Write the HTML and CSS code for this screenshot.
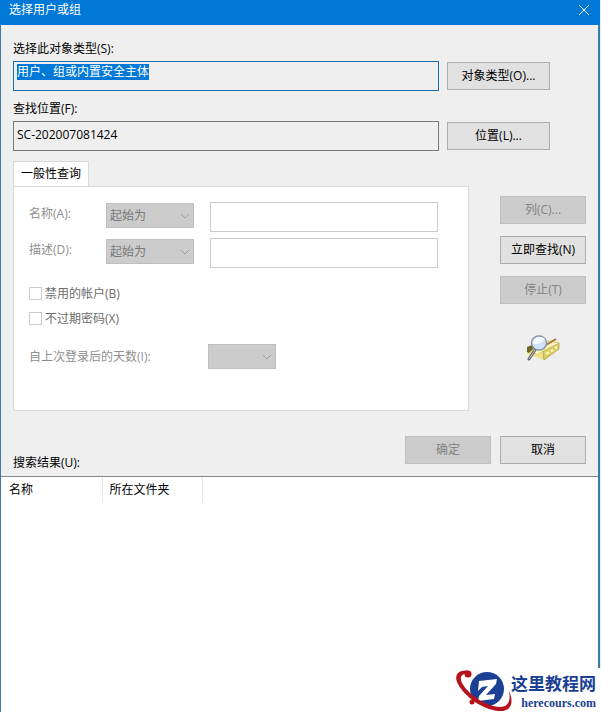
FILE: index.html
```html
<!DOCTYPE html>
<html lang="zh-CN">
<head>
  <meta charset="UTF-8">
  <meta name="viewport" content="width=device-width, initial-scale=1">
  <title>选择用户或组</title>
  <link rel="stylesheet" href="styles.css">
</head>
<body>

  <div class="dialog">
    <header class="titlebar">
      <h1>选择用户或组</h1>
      <button type="button" class="close" aria-label="关闭">
        <svg width="12" height="12" viewBox="0 0 12 12"><path d="M1 1l10 10M11 1L1 11"/></svg>
      </button>
    </header>

    <form class="content">
      <label for="object-type">选择此对象类型(S):</label>
      <div class="picker">
        <div class="field focused" id="object-type" role="textbox" aria-readonly="true"><mark>用户、组或内置安全主体</mark></div>
        <button type="button">对象类型(O)...</button>
      </div>

      <label for="location">查找位置(F):</label>
      <div class="picker">
        <input class="field" id="location" type="text" value="SC-202007081424" readonly>
        <button type="button">位置(L)...</button>
      </div>

      <div class="query">
        <div class="tabs">
          <button type="button" class="tab">一般性查询</button>
          <div class="panel">
            <div class="criteria">
              <label for="name-op">名称(A):</label>
              <div class="select">
                <select id="name-op" disabled><option>起始为</option></select>
                <svg width="10" height="6" viewBox="0 0 10 6"><path d="M1 1l4 4 4-4"/></svg>
              </div>
              <input type="text" aria-label="名称" disabled>
              <label for="desc-op">描述(D):</label>
              <div class="select">
                <select id="desc-op" disabled><option>起始为</option></select>
                <svg width="10" height="6" viewBox="0 0 10 6"><path d="M1 1l4 4 4-4"/></svg>
              </div>
              <input type="text" aria-label="描述" disabled>
            </div>
            <label class="check"><input type="checkbox" disabled>禁用的帐户(B)</label>
            <label class="check"><input type="checkbox" disabled>不过期密码(X)</label>
            <div class="days">
              <label for="days">自上次登录后的天数(I):</label>
              <div class="select">
                <select id="days" disabled><option></option></select>
                <svg width="10" height="6" viewBox="0 0 10 6"><path d="M1 1l4 4 4-4"/></svg>
              </div>
            </div>
          </div>
        </div>

        <div class="actions">
          <button type="button" disabled>列(C)...</button>
          <button type="button">立即查找(N)</button>
          <button type="button" disabled>停止(T)</button>
          <svg class="search-icon" width="34" height="28" viewBox="0 0 34 28">
            <path d="M1 13l16-6 11-1 5 3v6L18 26 1 20z" fill="#eee48c"/>
            <path d="M17 17L33 9v6L18 26z" fill="#dccf62" stroke="#a99c48" stroke-width=".7"/>
            <path d="M6 17l17-10 10 2-16 8-6 4z" fill="#fbf6bd" stroke="#c4b866" stroke-width=".6"/>
            <path d="M20 20l3-2M25 17l2-1M29 14l2-1" stroke="#fffbd8" stroke-width="2"/>
            <path d="M1 13l5-2 2 3-5 5-2-1z" fill="#6b6328"/>
            <path d="M20 11l10-6" stroke="#a36f3a" stroke-width="1.6"/>
            <path d="M9 16l-6 9" stroke="#666" stroke-width="3" stroke-linecap="round"/>
            <path d="M9 16l-6 9" stroke="#c4c4c4"/>
            <ellipse cx="13" cy="9" rx="7.5" ry="7" fill="#cfe2f7" stroke="#8591a5" stroke-width="1.4"/>
            <path d="M7 10q7 1 12-5-3-3-8-2-4 2-4 7z" fill="#f3f9ff"/>
          </svg>
        </div>
      </div>

      <div class="buttons">
        <button type="submit" disabled>确定</button>
        <button type="button">取消</button>
      </div>
      <h2 id="results-title">搜索结果(U):</h2>
    </form>

    <div class="results">
      <table aria-labelledby="results-title">
        <thead>
          <tr><th>名称</th><th>所在文件夹</th></tr>
        </thead>
      </table>
    </div>
  </div>

  <a class="brand" href="#">
    <svg width="60" height="44" viewBox="0 0 60 44">
      <ellipse cx="33" cy="21" rx="17" ry="17" fill="#1b3f94"/>
      <path d="M25 13l18-2-1 5-10 11 9-1-1 5-16 2 1-5 9-10-6 1-4 4z" fill="#fff"/>
      <path d="M15 3C5 1-1 7 4 16c7 13 24 25 40 27 12 1 17-7 11-20 2 10-1 16-9 16C31 38 14 26 8 15 5 9 8 5 15 6z" fill="#b5121b"/>
      <circle cx="14" cy="6" r="3.500" fill="#b5121b"/>
      <circle cx="18" cy="34" r="2.500" fill="#b5121b"/>
    </svg>
    <span class="brand-text"><strong>这里教程网</strong><span>herecours.com</span></span>
  </a>

</body>
</html>
```
FILE: styles.css
```css
:root {
  --accent: #0078d7;
  --face: #efefef;
  --button: #e1e1e1;
  --disabled: #cccccc;
  --line: #adadad;
  --soft-line: #d9d9d9;
}

* {
  box-sizing: border-box;
}

body {
  margin: 0;
  background: #e4eef5;
  color: #000;
  font: 12px/16px "Open Sans", "Noto Sans CJK SC", sans-serif;
}

button,
input,
select {
  margin: 0;
  font: inherit;
  color: inherit;
}

svg {
  display: block;
  fill: none;
}

/* Window */
.dialog {
  display: flex;
  flex-direction: column;
  min-height: 100vh;
  margin-right: 1px;
  background: var(--face);
  border: solid #3d7ba3;
  border-width: 0 2px 0 1px;
}

.titlebar {
  display: flex;
  align-items: center;
  justify-content: space-between;
  height: 25px;
  margin: 0 -2px 0 -1px;
  padding: 0 10px 0 9px;
  background: var(--accent);
  color: #fff;
}

.titlebar h1 {
  margin: 0 0 6px;
  font-size: 12px;
  font-weight: normal;
}

.close {
  height: 12px;
  margin-bottom: 6px;
  padding: 0;
  border: 0;
  background: none;
}

.close svg {
  stroke: #fff;
}

.content {
  padding: 16px 12px 0;
}

.content > label {
  display: block;
}

button {
  height: 28px;
  padding: 0 4px;
  background: var(--button);
  border: 1px solid var(--line);
}

button:disabled {
  background: var(--disabled);
  border-color: #bfbfbf;
  color: #838383;
}

/* Field with its button */
.picker {
  display: grid;
  grid-template-columns: 1fr 103px;
  align-items: center;
  gap: 8px;
  margin: 4px 36px 10px 0;
}

.field {
  width: 100%;
  height: 30px;
  padding: 2px 3px 6px;
  background: var(--face);
  border: 1px solid #7a7a7a;
  border-radius: 0;
}

.focused {
  border-color: #1c6fa5;
}

.field mark {
  display: inline-block;
  background: var(--accent);
  color: #fff;
}

/* Query tab */
.query {
  display: flex;
  gap: 31px;
}

.tabs {
  flex: 1;
}

.tab {
  position: relative;
  display: block;
  height: 25px;
  padding: 0 7px;
  background: #fff;
  border-color: var(--soft-line);
  border-bottom: 0;
}

.panel {
  height: 225px;
  padding: 15px 30px 0 15px;
  background: #fff;
  border: 1px solid var(--soft-line);
  color: #8f8f8f;
}

.criteria {
  display: grid;
  grid-template-columns: 61px 88px 1fr;
  column-gap: 16px;
  row-gap: 6px;
}

.criteria label {
  padding-top: 4px;
}

.criteria .select {
  margin-top: 1px;
}

.criteria input {
  width: 100%;
  height: 30px;
  background: #fff;
  border: 1px solid #cccccc;
}

.select {
  position: relative;
  height: 25px;
}

.select select {
  width: 100%;
  height: 100%;
  padding: 0 3px;
  appearance: none;
  background: var(--disabled);
  border: 1px solid #bfbfbf;
  border-radius: 0;
  color: #777;
  opacity: 1;
}

.select svg {
  position: absolute;
  top: 10px;
  right: 4px;
  stroke: #a0a0a0;
}

.check {
  display: flex;
  align-items: center;
  gap: 3px;
  height: 25px;
  color: #6d6d6d;
}

.criteria + .check {
  margin-top: 13px;
}

.check input {
  width: 13px;
  height: 13px;
  appearance: none;
  background: #fff;
  border: 1px solid #cccccc;
}

.days {
  display: grid;
  grid-template-columns: 179px 68px;
  align-items: center;
  margin-top: 13px;
}

.actions {
  display: flex;
  flex-direction: column;
  gap: 12px;
  width: 86px;
  padding-top: 35px;
}

.search-icon {
  align-self: center;
  margin-top: 18px;
}

.buttons {
  display: flex;
  justify-content: flex-end;
  gap: 9px;
  margin-top: 25px;
}

.buttons button {
  width: 86px;
}

h2 {
  margin: -9px 0 5px;
  font-size: 12px;
  font-weight: normal;
}

/* Result list */
.results {
  flex: 1;
  padding-left: 1px;
  background: #fff;
  border-top: 1px solid #828790;
}

table {
  border-collapse: collapse;
}

th {
  width: 100px;
  height: 25px;
  padding: 0 7px;
  border-right: 1px solid #e5e5e5;
  font-weight: normal;
  text-align: left;
}

/* Site mark over the corner of the window */
.brand {
  position: absolute;
  right: 0;
  bottom: 0;
  display: flex;
  align-items: center;
  padding-right: 5px;
  background: #fff;
  color: #1b3f94;
  text-decoration: none;
}

.brand-text {
  display: flex;
  flex-direction: column;
  align-items: flex-end;
  margin-left: -3px;
}

.brand strong {
  font: bold 17px/26px "Noto Sans CJK SC", sans-serif;
}

.brand span span {
  font: bold 12px/14px "Liberation Serif", serif;
}
```
